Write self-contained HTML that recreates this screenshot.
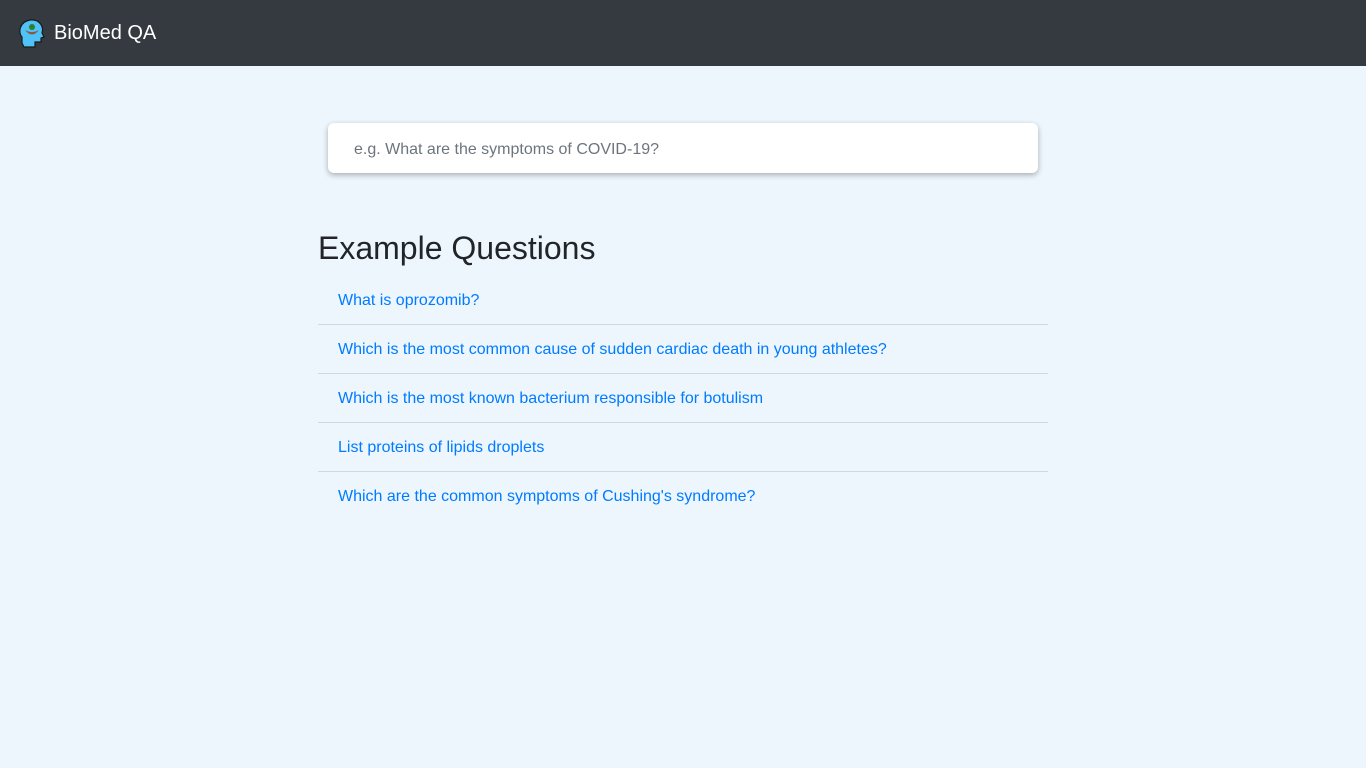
<!DOCTYPE html>
<html><head><style>
body{margin:0;background:#eef6fd;font-family:"Liberation Sans",sans-serif;}
.nav{height:66px;background:#343a40;display:flex;align-items:center;padding-left:18px;}
.nav span{color:#fff;font-size:20px;margin-left:8px;}
.search{position:absolute;left:328px;top:123px;width:710px;height:50px;background:#fff;border-radius:6px;box-shadow:0 2px 6px rgba(0,0,0,.3);}
.search span{position:absolute;left:26px;top:18px;font-size:16px;color:#6c757d;}
h2{position:absolute;left:318px;top:230px;margin:0;font-weight:400;font-size:32px;color:#212529;}
ul{position:absolute;left:318px;top:276px;width:730px;margin:0;padding:0;list-style:none;}
li{height:48px;line-height:49px;padding-left:20px;color:#007bff;font-size:16px;border-bottom:1px solid #d0d7de;}
li:last-child{border:none;}
</style></head><body>
<div class="nav"><svg width="28" height="32" viewBox="0 0 28 32"><path d="M4 26 L4 20 C0 16 1 5 12 3 C22 2 26 10 24 16 L26 20 L23 21 L23 25 L17 25 L17 30 L6 30 Z" fill="#4fc3f7" stroke="#1a1a1a" stroke-width="1.2"/><path d="M7 13 Q14 22 21 13 Q14 17 7 13Z" fill="#8d5a3b"/><circle cx="14" cy="10" r="3" fill="#2e7d32"/></svg><span>BioMed QA</span></div>
<div class="search"><span>e.g. What are the symptoms of COVID-19?</span></div>
<h2>Example Questions</h2>
<ul>
<li>What is oprozomib?</li>
<li>Which is the most common cause of sudden cardiac death in young athletes?</li>
<li>Which is the most known bacterium responsible for botulism</li>
<li>List proteins of lipids droplets</li>
<li>Which are the common symptoms of Cushing's syndrome?</li>
</ul>
</body></html>
